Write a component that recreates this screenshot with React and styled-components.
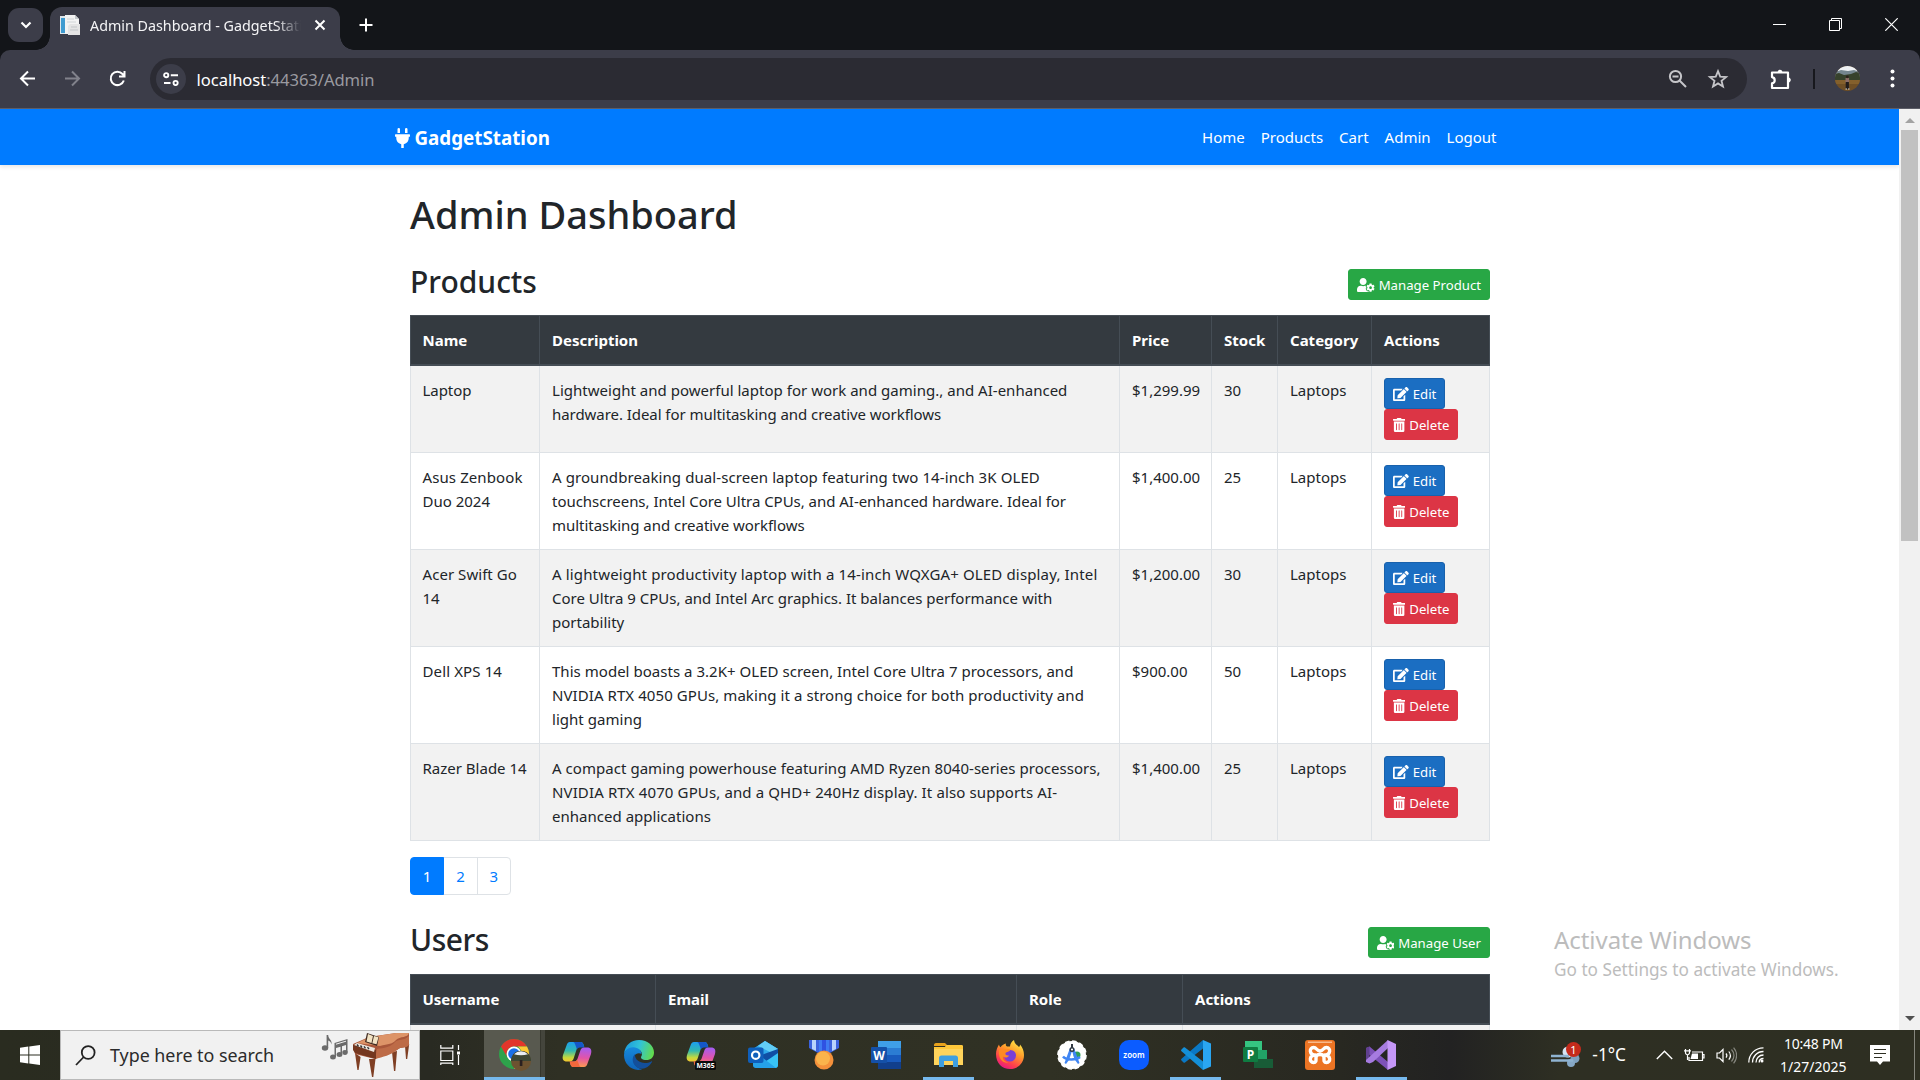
import React from "react";
import styled, { createGlobalStyle, css } from "styled-components";
import { FaPlug, FaUserCog, FaEdit, FaTrashAlt } from "react-icons/fa";

const GlobalStyle = createGlobalStyle`
  *, *::before, *::after { box-sizing: border-box; }
  body {
    margin: 0;
    overflow: hidden;
    font-family: "Noto Sans", "Open Sans", sans-serif;
    font-size: 15px;
    line-height: 24px;
    color: #212529;
    background: #fff;
  }
  svg { display: block; flex: none; }
`;

const Desktop = styled.div`
  width: 1920px;
  height: 1080px;
  display: flex;
  flex-direction: column;
  overflow: hidden;
`;

/* ---------- browser frame ---------- */

const TabStrip = styled.header`
  flex: none;
  height: 50px;
  display: flex;
  background: #131519;
  color: #fff;
`;

const TabSearch = styled.button`
  width: 35px;
  height: 34px;
  margin: 8px 7px 0 8px;
  padding: 0;
  border: 0;
  border-radius: 11px;
  background: #3c3d49;
  display: grid;
  place-items: center;
`;

const Tab = styled.div`
  position: relative;
  width: 290px;
  height: 43px;
  margin-top: 7px;
  padding: 0 13px 7px 10px;
  border-radius: 12px 12px 0 0;
  background: #3c3d49;
  display: flex;
  align-items: center;
  &::before,
  &::after {
    content: "";
    position: absolute;
    bottom: 0;
    width: 14px;
    height: 14px;
  }
  &::before {
    left: -14px;
    background: radial-gradient(circle at 0 0, transparent 13.5px, #3c3d49 14px);
  }
  &::after {
    right: -14px;
    background: radial-gradient(circle at 100% 0, transparent 13.5px, #3c3d49 14px);
  }
`;

const TabTitle = styled.span`
  width: 211px;
  margin: 0 13px 0 10px;
  padding-top: 1px;
  overflow: hidden;
  white-space: nowrap;
  font-size: 14.3px;
  color: #f4f4f6;
  mask-image: linear-gradient(90deg, #000 88%, transparent 100%);
`;

const NewTab = styled.div`
  width: 51px;
  height: 50px;
  display: grid;
  place-items: center;
`;

const WindowControls = styled.div`
  margin-left: auto;
  display: flex;
  gap: 43px;
  padding: 18px 22px 0 0;
`;

const ToolbarBack = styled.div`
  flex: none;
  background: #131519;
`;

const Toolbar = styled.div`
  height: 59px;
  display: flex;
  align-items: center;
  padding: 0 18px 1px 18px;
  border-bottom: 1px solid #5d5e68;
  border-radius: 10px 10px 0 0;
  background: #3c3d49;
  color: #fff;
`;

const NavIcons = styled.div`
  display: flex;
  gap: 26px;
  margin-right: 23px;
`;

const Omnibox = styled.div`
  flex: none;
  width: 1597px;
  height: 42px;
  padding: 0 18px 0 6px;
  border-radius: 21px;
  background: #2b2b33;
  display: flex;
  align-items: center;
`;

const SiteInfo = styled.span`
  width: 30px;
  height: 30px;
  margin-right: 10.5px;
  border-radius: 50%;
  background: #3c3d49;
  display: grid;
  place-items: center;
`;

const Url = styled.span`
  padding-top: 2px;
  font-size: 16.6px;
  letter-spacing: -0.05px;
  color: #9a9aa0;
  b {
    font-weight: 400;
    color: #fff;
  }
`;

const OmniActions = styled.div`
  margin-left: auto;
  display: flex;
  align-items: center;
  gap: 18px;
`;

const ToolbarActions = styled.div`
  flex: 1;
  display: flex;
  align-items: center;
  padding-left: 22px;
`;

const Divider = styled.i`
  width: 2px;
  height: 20px;
  margin: 0 20px 0 20px;
  background: #17181d;
`;

/* ---------- web page ---------- */

const Viewport = styled.div`
  position: relative;
  flex: 1;
  min-height: 0;
  display: flex;
`;

const Page = styled.main`
  flex: 1;
  overflow: hidden;
`;

const Scrollbar = styled.div`
  flex: none;
  width: 21px;
  padding: 7px 0 8px;
  background: #f1f1f1;
  display: flex;
  flex-direction: column;
  align-items: center;
  justify-content: space-between;
`;

const ScrollThumb = styled.div`
  width: 17px;
  height: 411px;
  margin: 5px 0 auto;
  background: #c1c1c1;
`;

const Navbar = styled.nav`
  height: 56px;
  padding: 0 394.5px;
  background: #007bff;
  box-shadow: 0 2px 4px rgba(0, 0, 0, 0.1);
  display: flex;
  align-items: center;
  justify-content: space-between;
  color: #fff;
`;

const Brand = styled.div`
  display: flex;
  align-items: center;
  gap: 5px;
  padding-top: 2px;
  font-size: 18.8px;
  font-weight: 700;
`;

const PlugIcon = styled(FaPlug)`
  width: 15px;
  height: 20px;
`;

const UserCogIcon = styled(FaUserCog)`
  width: 17.5px;
  height: 14px;
`;

const EditIcon = styled(FaEdit)`
  width: 15.75px;
  height: 14px;
`;

const TrashIcon = styled(FaTrashAlt)`
  width: 12.25px;
  height: 14px;
`;

const NavLinks = styled.div`
  display: flex;
  padding-right: 8px;
  gap: 16px;
`;

const NavLink = styled.a`
  color: #fff;
`;

const Container = styled.div`
  width: 1080px;
  margin-left: 410px;
  padding-top: 25px;
`;

const Title = styled.h1`
  margin: 0 0 24px;
  font-size: 38px;
  font-weight: 500;
  line-height: 48px;
`;

const SectionHead = styled.div`
  height: 38px;
  margin-bottom: ${(p) => p.$gap}px;
  display: flex;
  align-items: flex-end;
  justify-content: space-between;
`;

const SectionTitle = styled.h2`
  margin: 0;
  font-size: 30px;
  font-weight: 500;
  line-height: 36px;
  letter-spacing: ${(p) => p.$track || 0}px;
`;

const tones = {
  success: ["#28a745", "#28a745"],
  primary: ["#1b6ec2", "#1861ac"],
  danger: ["#dc3545", "#dc3545"],
};

const Button = styled.button`
  display: flex;
  align-items: center;
  gap: 4px;
  height: 31px;
  padding: 1px 8px 0;
  border: 1px solid ${(p) => tones[p.$tone][1]};
  border-radius: 3px;
  background: ${(p) => tones[p.$tone][0]};
  color: #fff;
  font-family: inherit;
  font-size: 13.2px;
  line-height: 21px;
  white-space: nowrap;
`;

const Table = styled.table`
  width: 1080px;
  table-layout: fixed;
  border-collapse: collapse;
  margin-bottom: 16px;
`;

const Col = styled.col`
  width: ${(p) => (p.$w ? p.$w + "px" : "auto")};
`;

const Th = styled.th`
  padding: 12px;
  border: 1px solid #454d55;
  border-bottom-width: 2px;
  background: #343a40;
  color: #fff;
  font-weight: 700;
  text-align: left;
  &:first-child {
    padding-left: 11.5px;
  }
`;

const Tr = styled.tr`
  height: ${(p) => p.$h || 97}px;
  &:nth-child(odd) {
    background: #f2f2f2;
  }
`;

const Td = styled.td`
  padding: 12px;
  border: 1px solid #dee2e6;
  vertical-align: top;
  &:first-child {
    padding-left: 11.5px;
  }
`;

const Line = styled.span`
  display: block;
  white-space: nowrap;
  letter-spacing: ${(p) => p.$track}px;
`;

const ButtonStack = styled.div`
  display: flex;
  flex-direction: column;
  align-items: flex-start;
`;

const Pagination = styled.div`
  display: flex;
  margin-bottom: 25px;
`;

const PageLink = styled.a`
  width: 34.3px;
  height: 38px;
  display: grid;
  place-items: center;
  margin-left: -1px;
  border: 1px solid #dee2e6;
  color: #007bff;
  &:first-child {
    margin-left: 0;
    border-radius: 4px 0 0 4px;
  }
  &:last-child {
    border-radius: 0 4px 4px 0;
  }
  ${(p) =>
    p.$active &&
    css`
      position: relative;
      z-index: 1;
      color: #fff;
      background: #007bff;
      border-color: #007bff;
    `}
`;

const Watermark = styled.div`
  position: absolute;
  left: 1554px;
  top: 813px;
  color: #bcbcbc;
  font-size: 17.2px;
  line-height: 24px;
  white-space: nowrap;
  strong {
    display: block;
    font-size: 24px;
    font-weight: 400;
    line-height: 36px;
    letter-spacing: -0.05px;
  }
`;

/* ---------- taskbar ---------- */

const Taskbar = styled.footer`
  flex: none;
  height: 50px;
  display: flex;
  background: linear-gradient(90deg, #2a2c20 0, #292a22 430px, #2f3024 560px, #303124 1050px, #282821 1340px, #222222 1450px, #2e2f23 1560px, #2e2f22 100%);
  color: #fff;
`;

const Start = styled.div`
  width: 60px;
  display: grid;
  place-items: center;
`;

const SearchBox = styled.div`
  width: 360px;
  padding: 0 8px 0 14px;
  border: 1px solid #b9b9b9;
  background: #f1f1f1;
  color: #2b2b2b;
  display: flex;
  align-items: center;
  span {
    margin: 0 auto 0 14px;
    font-size: 17.9px;
    letter-spacing: -0.03px;
  }
`;

const TaskView = styled.div`
  width: 60px;
  margin-right: 4px;
  display: grid;
  place-items: center;
`;

const AppButton = styled.div`
  width: 61.9px;
  padding-top: ${(p) => (p.$open ? 3 : 0)}px;
  display: flex;
  flex-direction: column;
  align-items: center;
  justify-content: space-between;
  ${(p) =>
    p.$open &&
    css`
      &::after {
        content: "";
        width: ${p.$active ? 61 : 51}px;
        height: 3px;
        background: #76b9ed;
      }
    `}
  ${(p) =>
    p.$active &&
    css`
      align-items: flex-start;
      background: linear-gradient(90deg, #58594f 56px, #35362d 56px, #35362d 57px, #44453c 57px, #44453c 61px, transparent 61px);
    `}
`;

const AppGlyph = styled.div`
  flex: 1;
  width: 61px;
  display: grid;
  place-items: center;
`;

const Tray = styled.div`
  flex: 1;
  display: flex;
  align-items: center;
  padding-left: 139px;
`;

const Temp = styled.span`
  width: 74px;
  padding-left: 10px;
  font-size: 17.2px;
  white-space: nowrap;
`;

const TrayIcons = styled.div`
  display: flex;
  align-items: center;
  gap: 11px;
`;

const Clock = styled.div`
  width: 86px;
  margin-left: 6px;
  text-align: center;
  font-size: 14px;
  line-height: 23px;
  div:first-child {
    letter-spacing: -0.25px;
  }
`;

const ShowDesktop = styled.i`
  height: 50px;
  margin-left: auto;
  width: 6px;
  border-left: 1px solid #85867e;
`;

/* ---------- drawings ---------- */

const Stroke = ({ w, h = w, box, children, color = "#fff", sw = 2, ...rest }) => (
  <svg width={w} height={h} viewBox={box || `0 0 ${w} ${h}`} fill="none" stroke={color} strokeWidth={sw} {...rest}>
    {children}
  </svg>
);

const Favicon = () => (
  <svg width="20" height="20" viewBox="0 0 20 20">
    <path d="M0 1h10v18H0z" fill="#dfe7ec" />
    <path d="M1 3h4v15H1z" fill="#3f9bd0" />
    <path d="M5 0h10l4 4v15H5z" fill="#f3f3f3" />
    <path d="M15 0l4 4h-4z" fill="#c3c8cb" />
    <path d="M7 4h7M7 7h9" stroke="#d0d4d6" />
    <path d="M8 11l2-2h10v11H8z" fill="#e4e4e4" />
    <path d="M11 12h6M10 15h8" stroke="#c2c5c8" />
  </svg>
);

const Avatar = () => (
  <svg width="25" height="25" viewBox="0 0 25 25">
    <defs>
      <clipPath id="avatarClip"><circle cx="12.5" cy="12.5" r="12.5" /></clipPath>
    </defs>
    <g clipPath="url(#avatarClip)">
      <path d="M0 0h25v25H0z" fill="#6f4f25" />
      <path d="M0 0h25v5H0z" fill="#eef1f4" />
      <path d="M0 6l6-2 7 1 6-1 6 2v5H0z" fill="#75868f" />
      <path d="M0 8l4-1 5 2 7-1 5-2 4 1v7H0z" fill="#37422c" />
      <path d="M0 14h25v4H0z" fill="#84602c" />
      <path d="M10.500 12h3.600v5h-3.600z" fill="#8b6c66" />
      <circle cx="12.300" cy="10.800" r="1.400" fill="#2d211c" />
      <path d="M10.700 16h3.200v7h-3.200z" fill="#211c1c" />
      <path d="M10.500 23h1.500M13 23h1.500" stroke="#ddd" />
    </g>
  </svg>
);

const Piano = () => (
  <svg width="90" height="46" viewBox="0 0 90 46">
    <g fill="#6b6b6b">
      <ellipse cx="4" cy="16" rx="3.2" ry="2.8" />
      <path d="M5.6 3h1.600c0 4 4 4.500 3.400 9.500-.6-3-2.400-3.500-3.400-4V16H5.600z" />
      <ellipse cx="12" cy="25" rx="2.900" ry="2.500" />
      <ellipse cx="18.500" cy="22.500" rx="2.900" ry="2.500" />
      <ellipse cx="24" cy="20.500" rx="2.700" ry="2.400" />
      <path d="M13.500 11l13-4v13.500h-1.500v-7.500l-4 1.200v8h-1.500v-7.500l-4.500 1.400v9H13.500z" />
    </g>
    <path d="M15 12.200l10-3" stroke="#f1f1f1" strokeWidth="1" />
    <path d="M34 21l2.400 17h1.200l2-13zM48 27l3 18h1.300l2.200-18zM71 20l2 19h1.300l1.700-20zM84 14l1 13h1.200l2-15z" fill="#7f3f24" />
    <path d="M32 12l16-7 27-4h13v12c-4 4-7 1-12 5l-22 9-20-5z" fill="#a9573a" />
    <path d="M36 11l13-6 26-4h13c-1 5-9 3-13 7-3 4-8 4-16 6z" fill="#dd9468" />
    <path d="M56 17c7-1 14-2 18-7 3-3 9-1 14-6v9c-4 4-8 1-12 5-6 5-14 7-22 9z" fill="#bd6b47" />
    <path d="M32 13l3-1 20 6v9l-21-6-2-3z" fill="#74371f" />
    <path d="M33 13l3-2 18 5-1 4z" fill="#eee7df" />
    <path d="M36 12.500l1.500 2m2-1l1.500 2m2-1.200l1.500 2m2-1.200l1.500 2" stroke="#333" strokeWidth="1.400" />
    <path d="M46 1l12 4-2 9-12-4z" fill="#3f2a20" />
    <path d="M47 2l5 2-1.500 7-5-1.500zM53 4l4.500 1.200-2 7-4.200-1z" fill="#f2e3c3" />
  </svg>
);

const ChromeIcon = () => (
  <svg width="34" height="34" viewBox="0 0 34 34">
    <circle cx="16" cy="16" r="15" fill="#2ea24b" />
    <path d="M3 8.500A15 15 0 0 1 29 8.500H16a7.500 7.500 0 0 0-6.600 11z" fill="#e2352b" />
    <path d="M29 8.500A15 15 0 0 1 16 31l6.500-11.300c2-3.500 1-9-3-11.200z" fill="#fcc934" />
    <circle cx="16" cy="16" r="7.400" fill="#fff" />
    <circle cx="16" cy="16" r="5.800" fill="#1a6fe8" />
    <circle cx="23" cy="23" r="10" fill="#6d5230" />
    <path d="M13.700 19a10 10 0 0 1 18.600 0q1 2 .7 4H13q-.1-2 .7-4z" fill="#3d4634" />
    <path d="M16 16.200a10 10 0 0 1 14 0q-7 2-14 0z" fill="#e9edf2" />
    <path d="M21.800 22h2.600v6h-2.600z" fill="#2a2020" />
  </svg>
);

const Copilot = ({ label }) => (
  <svg width="30" height="30" viewBox="0 0 30 30">
    <defs>
      <linearGradient id="cpA" x1="0" y1="0" x2="0" y2="1">
        <stop offset="0" stopColor="#1d9ff0" /><stop offset=".45" stopColor="#31b8b0" /><stop offset=".8" stopColor="#c5d93c" /><stop offset="1" stopColor="#f4c430" />
      </linearGradient>
      <linearGradient id="cpB" x1="0.300" y1="0" x2="0.200" y2="1">
        <stop offset="0" stopColor="#a75cf0" /><stop offset=".5" stopColor="#e254a8" /><stop offset="1" stopColor="#ffa04a" />
      </linearGradient>
    </defs>
    <path d="M8 2h10c3 0 3.500 2 4.300 5H18c-2 0-3 1-3.600 3l-2.600 8c-.7 2-1.500 3.500-4 3.500H5c-4 0-5-2.500-4-6.500L4.500 5.500C5.200 3.200 6 2 8 2z" fill="url(#cpA)" />
    <path d="M18 2c3 0 3.500 2 4.300 5.500H18c-1.500 0-2.500.5-3 2L13 4c-.5-1.300-1-2-2-2z" fill="#1557c8" />
    <path d="M22 27H12c-3 0-3.500-2-4.300-5.500H12c2 0 3-1 3.600-3l2.600-7.500c.7-2 1.500-3.500 4-3.500H25c4 0 5 2.500 4 6.500l-3.500 9.500c-.7 2.300-1.500 3.500-3.500 3.500z" fill="url(#cpB)" />
    <path d="M12 27c-3 0-3.500-2-4.300-5.500H12c1.500 0 2.500-.5 3-2l2 5c.5 1.500 1 2.500 2 2.500z" fill="#f2683c" />
    {label && (
      <>
        <rect x="9" y="21" width="21" height="9" rx="1.500" fill="#0b0b0b" />
        <text x="19.500" y="28.100" textAnchor="middle" fontSize="6.800" fontWeight="700" fill="#fff">{label}</text>
      </>
    )}
  </svg>
);

const Edge = () => (
  <svg width="30" height="30" viewBox="0 0 30 30">
    <defs>
      <linearGradient id="edA" x1="0" y1="0.300" x2="1" y2="0.500">
        <stop offset="0" stopColor="#1a9ae0" /><stop offset=".5" stopColor="#31c3d8" /><stop offset="1" stopColor="#63dc4c" />
      </linearGradient>
      <linearGradient id="edB" x1="0" y1="0" x2="0" y2="1">
        <stop offset="0" stopColor="#1689dd" /><stop offset="1" stopColor="#0f63b8" />
      </linearGradient>
    </defs>
    <path d="M0 14C1 5 7 0 15 0c9 0 15 6 15 12.500 0 5-3.500 7.500-7.500 7.500-4.500 0-6.500-2-5-4 1-1.500.6-5.500-4-7C8 7 2 9 0 14z" fill="url(#edA)" />
    <path d="M0 15C.5 10 5 7 9.500 7.300c4.500.3 8 3 8 6.700-2-1.500-6-1-7.500 2.500-2 5 1.500 11.500 8 12.800-2 .7-2.500.7-4 .7C6 29.500 0 23 0 15z" fill="url(#edB)" />
    <path d="M11 14c-3 3-3.500 9 1 12.500 5 4 12 2.500 16-4.500.3-.6-.2-1-.8-.6-2 1.100-4 1.600-6.200 1.600-6 0-10.500-4-10-9z" fill="#134f9b" />
  </svg>
);

const Outlook = () => (
  <svg width="30" height="28" viewBox="0 0 30 28">
    <path d="M5 8L17 0l13 8v17l-2 2H8l-3-2z" fill="#1684d8" />
    <path d="M5 8L17 0l13 8-14 9z" fill="#2fa8ea" />
    <path d="M17 0l13 8-6 4L10 5z" fill="#62cdf5" />
    <path d="M13 14l17-6v6l-16 8z" fill="#0f4fa5" />
    <path d="M30 12v12c0 2-1 3-3 3H8z" fill="#38c3f5" />
    <path d="M5 22l10-5 13 10H8c-2 0-3-1-3-3z" fill="#25a1e8" />
    <rect x="0" y="6.500" width="15.500" height="15.500" rx="2" fill="#0f5fbb" />
    <circle cx="7.700" cy="14.200" r="3.700" fill="none" stroke="#fff" strokeWidth="2.200" />
  </svg>
);

const Medal = () => (
  <svg width="30" height="30" viewBox="0 0 30 30">
    <path d="M0 0h30v8l-9 5H9L0 8z" fill="#3c63dd" />
    <path d="M3 0h4v11l-4-2zM23 0h4v9l-4 2z" fill="#b9d4fb" />
    <path d="M10 0h10v13H10z" fill="#3f7bf2" />
    <path d="M13 0h4v13h-4z" fill="#2f52e2" />
    <circle cx="15" cy="20" r="9.500" fill="#f4913b" />
    <circle cx="14" cy="18.500" r="7" fill="#fab44c" />
  </svg>
);

const Word = () => (
  <svg width="30" height="28" viewBox="0 0 30 28">
    <path d="M7 0h23v7H7z" fill="#3f9fe8" />
    <path d="M7 7h23v7H7z" fill="#2b7cd3" />
    <path d="M7 14h23v7H7z" fill="#185abd" />
    <path d="M7 21h23v7H7z" fill="#113f8c" />
    <rect x="0" y="6" width="16" height="16" rx="1" fill="#1450a8" />
    <text x="8" y="18.500" textAnchor="middle" fontSize="12" fontWeight="700" fill="#fff">W</text>
  </svg>
);

const Explorer = () => (
  <svg width="29" height="24" viewBox="0 0 29 24">
    <path d="M0 2c0-1 .5-2 2-2h9l3 3H0z" fill="#e8a21c" />
    <path d="M0 4h11l2-2h14c1.500 0 2 .7 2 2v18H0z" fill="#ffd45c" />
    <path d="M0 4h11l2-2h14c1.500 0 2 .7 2 2v2H0z" fill="#ffc83a" />
    <path d="M5 24v-9c0-1.500.8-2.500 2.500-2.500h14c1.500 0 2.500 1 2.500 2.500v9h-5v-6h-9v6z" fill="#3f9fe0" />
  </svg>
);

const Firefox = () => (
  <svg width="30" height="30" viewBox="0 0 30 30">
    <defs>
      <linearGradient id="ffA" x1="0.800" y1="0" x2="0.250" y2="1">
        <stop offset="0" stopColor="#fff04a" /><stop offset=".4" stopColor="#ff9a2a" /><stop offset=".75" stopColor="#ff3f4c" /><stop offset="1" stopColor="#e3148a" />
      </linearGradient>
    </defs>
    <path d="M1 14C1 10 2.500 7 4 4.500c.3 1.500.8 2 1.500 2.800C7 5 9 4 11 3.500 10.500 5 11 6 12 6.500h3C15 4 16.500 1.500 19 0c.5 4 3 5 5 7 .8-.5 1-1.500 1-2.500C27.500 7 29 11 29 15c0 8-6 14-14 14S1 23 1 14z" fill="url(#ffA)" />
    <path d="M9 15c0-3 3-5 6-5 4 0 6 2.800 6 5.500a6 6 0 0 1-6.500 6C11 21.500 9 18.500 9 15z" fill="#7a3fd6" />
    <path d="M4 10c3-2 6-1.500 7.500-.5 1.500-.6 3-.5 4 .3-1 2.200-4 2-5 3.200-.5 1.500 1 3 3.500 2.500-1 2.500-4.500 2.500-6 1-.5 3 2 5.500 5.500 6.200C8 23.500 3 19 4 10z" fill="#ff8a22" />
  </svg>
);

const AndroidStudio = () => (
  <svg width="30" height="30" viewBox="0 0 30 30">
    <circle cx="15" cy="15" r="14" fill="#fff" />
    <circle cx="15" cy="15" r="14" fill="none" stroke="#fff" strokeWidth="1.600" strokeDasharray="4.500 2.800" />
    <circle cx="20" cy="15" r="3.500" fill="#2f9e58" />
    <path d="M6 16.500c3 3.800 13 3.800 17 .5" stroke="#4086f4" strokeWidth="2.500" fill="none" />
    <path d="M13 8h4l5.500 15-1.500 1-3-4-3-9-3 9-3 4-1.500-1z" fill="#4086f4" />
    <path d="M14 4h2v4h-2z" fill="#303842" />
    <circle cx="15" cy="9.500" r="2.500" fill="#303842" />
    <circle cx="15" cy="9.500" r="1.100" fill="#fff" />
  </svg>
);

const Zoom = () => (
  <svg width="30" height="30" viewBox="0 0 30 30">
    <rect width="30" height="30" rx="10" fill="#0b5cff" />
    <text x="15" y="17.600" textAnchor="middle" fontSize="8" fontWeight="600" fill="#fff">zoom</text>
  </svg>
);

const VSCode = () => (
  <svg width="30" height="30" viewBox="0 0 30 30">
    <path d="M22 0L30 3.500v23L22 30z" fill="#2aa6f2" />
    <path d="M22 0v8.500L4 22.500c-.5.400-1 .3-1.500-.1L.500 20.500c-.6-.6-.6-1.200 0-1.700z" fill="#0a78c4" />
    <path d="M22 30v-8.500L4 7.500c-.5-.4-1-.3-1.500.1L.500 9.500c-.6.6-.6 1.200 0 1.700z" fill="#148fd8" />
  </svg>
);

const Project = () => (
  <svg width="30" height="28" viewBox="0 0 30 28">
    <path d="M2 0h17v10H2z" fill="#35c481" />
    <path d="M13 9h11v10H13z" fill="#21a366" />
    <path d="M11 18h19v9H11z" fill="#185c37" />
    <rect x="0" y="6" width="15" height="15" rx="1" fill="#0f7b41" />
    <text x="7.500" y="18" textAnchor="middle" fontSize="12" fontWeight="700" fill="#fff">P</text>
  </svg>
);

const Xampp = () => (
  <svg width="30" height="30" viewBox="0 0 30 30">
    <rect width="30" height="30" rx="3" fill="#ec7424" />
    <path d="M3 1.500h24v1.500H3z" fill="#f9b98b" />
    <path d="M10.500 15C4 15 4 7.500 8.500 7.500c3.500 0 3 3.500 6.500 3.500s3-3.500 6.500-3.500C26 7.500 26 15 19.500 15c6.500 0 6.500 7.500 2 7.500-3 0-2.500-2.500-2.500-5s-1.500-3-4-3-4 .5-4 3 .5 5-2.500 5C4 22.500 4 15 10.500 15z" fill="none" stroke="#fff" strokeWidth="3.400" strokeLinejoin="round" />
  </svg>
);

const VisualStudio = () => (
  <svg width="30" height="30" viewBox="0 0 30 30">
    <path d="M0 8l3.500-1.500L22 22v8L3 14.500v7L0 20z" fill="#7d51b8" />
    <path d="M0 8l3.500-1.500V22L0 20z" fill="#60408f" />
    <path d="M3.500 23.500L0 22v-2L22 0v8L7 22z" fill="#a67be0" />
    <path d="M21.500 0L30 4v22l-8.500 4z" fill="#c597f8" />
  </svg>
);

const Weather = () => (
  <svg width="31" height="26" viewBox="0 0 31 26">
    <circle cx="17" cy="10" r="5.500" fill="#d5e4f3" />
    <circle cx="24" cy="16.500" r="4.500" fill="#7ea0be" />
    <circle cx="20" cy="21" r="4" fill="#86a8c6" />
    <path d="M0 14h18M0 18.500h22" stroke="#8fb3d1" strokeWidth="2.600" />
    <circle cx="22.500" cy="7.500" r="7.500" fill="#c42b1c" />
    <text x="22.300" y="11.500" textAnchor="middle" fontSize="11" fill="#fff">1</text>
  </svg>
);

/* ---------- data ---------- */

const products = [
  {
    name: [["Laptop", -0.05]],
    description: [
      ["Lightweight and powerful laptop for work and gaming., and AI-enhanced", 0.018],
      ["hardware. Ideal for multitasking and creative workflows", -0.055],
    ],
    price: "$1,299.99", stock: 30, height: 87,
  },
  {
    name: [["Asus Zenbook", 0.1], ["Duo 2024", 0]],
    description: [
      ["A groundbreaking dual-screen laptop featuring two 14-inch 3K OLED", 0.085],
      ["touchscreens, Intel Core Ultra CPUs, and AI-enhanced hardware. Ideal for", -0.03],
      ["multitasking and creative workflows", -0.03],
    ],
    price: "$1,400.00", stock: 25,
  },
  {
    name: [["Acer Swift Go", 0.05], ["14", 0]],
    description: [
      ["A lightweight productivity laptop with a 14-inch WQXGA+ OLED display, Intel", 0.15],
      ["Core Ultra 9 CPUs, and Intel Arc graphics. It balances performance with", 0],
      ["portability", 0],
    ],
    price: "$1,200.00", stock: 30,
  },
  {
    name: [["Dell XPS 14", 0.12]],
    description: [
      ["This model boasts a 3.2K+ OLED screen, Intel Core Ultra 7 processors, and", 0.03],
      ["NVIDIA RTX 4050 GPUs, making it a strong choice for both productivity and", 0.074],
      ["light gaming", 0.03],
    ],
    price: "$900.00", stock: 50,
  },
  {
    name: [["Razer Blade 14", 0]],
    description: [
      ["A compact gaming powerhouse featuring AMD Ryzen 8040-series processors,", 0.045],
      ["NVIDIA RTX 4070 GPUs, and a QHD+ 240Hz display. It also supports AI-", 0.125],
      ["enhanced applications", 0.02],
    ],
    price: "$1,400.00", stock: 25,
  },
];

const productColumns = [["Name", 129], ["Description", 580], ["Price", 92], ["Stock", 66], ["Category", 94], ["Actions"]];
const userColumns = [["Username", 245], ["Email", 361], ["Role", 166], ["Actions"]];

const apps = [
  { icon: <ChromeIcon />, open: true, active: true },
  { icon: <Copilot /> },
  { icon: <Edge /> },
  { icon: <Copilot label="M365" /> },
  { icon: <Outlook /> },
  { icon: <Medal /> },
  { icon: <Word /> },
  { icon: <Explorer />, open: true },
  { icon: <Firefox /> },
  { icon: <AndroidStudio /> },
  { icon: <Zoom /> },
  { icon: <VSCode />, open: true },
  { icon: <Project /> },
  { icon: <Xampp /> },
  { icon: <VisualStudio />, open: true },
];

const Lines = ({ rows }) => rows.map(([text, track]) => <Line key={text} $track={track}>{text}</Line>);

const TableHead = ({ columns }) => (
  <>
    <colgroup>{columns.map(([name, w]) => <Col key={name} $w={w} />)}</colgroup>
    <thead><tr>{columns.map(([name]) => <Th key={name}>{name}</Th>)}</tr></thead>
  </>
);

const BrowserFrame = () => (
  <>
    <TabStrip>
      <TabSearch>
        <Stroke w={12} h={8} sw={2.2}><path d="M1.500 1.500L6 6l4.500-4.500" /></Stroke>
      </TabSearch>
      <Tab>
        <Favicon />
        <TabTitle>Admin Dashboard - GadgetStation</TabTitle>
        <Stroke w={12}><path d="M1.500 1.500l9 9M10.500 1.500l-9 9" /></Stroke>
      </Tab>
      <NewTab><Stroke w={14}><path d="M7 .5v13M.5 7h13" /></Stroke></NewTab>
      <WindowControls>
        <Stroke w={13} sw={1}><path d="M0 6.500h13" /></Stroke>
        <Stroke w={13} sw={1}><path d="M.5 2.500h10v10H.5zM2.500 2.500v-2h10v10h-2" /></Stroke>
        <Stroke w={13} sw={1.200}><path d="M.3.300l12.400 12.400M12.700.300L.3 12.700" /></Stroke>
      </WindowControls>
    </TabStrip>
    <ToolbarBack>
      <Toolbar>
        <NavIcons>
          <Stroke w={19} sw={2}><path d="M17 9.500H3.500M10 2.500l-7 7 7 7" /></Stroke>
          <Stroke w={19} sw={2} color="#81828b"><path d="M2 9.500h13.500M9 2.500l7 7-7 7" /></Stroke>
          <Stroke w={19} sw={2}><path d="M15.800 11.500A6.700 6.700 0 1 1 14.500 5l1.700 1.700M16.500 2v5.500H11" /></Stroke>
        </NavIcons>
        <Omnibox>
          <SiteInfo>
            <Stroke w={16} h={14} sw={1.900}>
              <circle cx="3.200" cy="3.200" r="2.100" /><path d="M7.800 3.200h7.200M1 11h6.500" /><circle cx="12.600" cy="11" r="2.100" />
            </Stroke>
          </SiteInfo>
          <Url><b>localhost</b>:44363/Admin</Url>
          <OmniActions>
            <Stroke w={22} sw={2} color="#c5c5c9"><circle cx="8.500" cy="8.500" r="5.600" /><path d="M5.500 8.500h6M12.500 12.500l6.500 6.500" /></Stroke>
            <Stroke w={22} sw={1.800} color="#c5c5c9"><path d="M11 3.200l2.200 5.500 5.900.4-4.600 3.700 1.500 5.800-5-3.200-5 3.200 1.500-5.800-4.600-3.700 5.900-.4z" /></Stroke>
          </OmniActions>
        </Omnibox>
        <ToolbarActions>
          <Stroke w={24} h={24} sw={2.200} strokeLinejoin="round">
            <path d="M3 5.500h16v15.500H3v-4.600c3.600-.6 3.600-5.700 0-6.300z" />
            <path d="M8.700 5c.3-3 4.400-3 4.700 0zM19.500 10.500c3 .4 3 4.500 0 4.900z" fill="#fff" stroke="none" />
          </Stroke>
          <Divider />
          <Avatar />
          <svg width="65" height="19" viewBox="0 0 65 19" fill="#fff"><circle cx="32.500" cy="2.500" r="2" /><circle cx="32.500" cy="9.500" r="2" /><circle cx="32.500" cy="16.500" r="2" /></svg>
        </ToolbarActions>
      </Toolbar>
    </ToolbarBack>
  </>
);

export default function App() {
  return (
    <Desktop>
      <GlobalStyle />
      <BrowserFrame />
      <Viewport>
        <Page>
          <Navbar>
            <Brand><PlugIcon />GadgetStation</Brand>
            <NavLinks>
              <NavLink>Home</NavLink>
              <NavLink>Products</NavLink>
              <NavLink>Cart</NavLink>
              <NavLink>Admin</NavLink>
              <NavLink>Logout</NavLink>
            </NavLinks>
          </Navbar>
          <Container>
            <Title>Admin Dashboard</Title>
            <SectionHead $gap={15}>
              <SectionTitle>Products</SectionTitle>
              <Button $tone="success"><UserCogIcon />Manage Product</Button>
            </SectionHead>
            <Table>
              <TableHead columns={productColumns} />
              <tbody>
                {products.map((p) => (
                  <Tr key={p.name[0][0]} $h={p.height}>
                    <Td><Lines rows={p.name} /></Td>
                    <Td><Lines rows={p.description} /></Td>
                    <Td>{p.price}</Td>
                    <Td>{p.stock}</Td>
                    <Td>Laptops</Td>
                    <Td>
                      <ButtonStack>
                        <Button $tone="primary"><EditIcon />Edit</Button>
                        <Button $tone="danger"><TrashIcon />Delete</Button>
                      </ButtonStack>
                    </Td>
                  </Tr>
                ))}
              </tbody>
            </Table>
            <Pagination>
              <PageLink $active>1</PageLink>
              <PageLink>2</PageLink>
              <PageLink>3</PageLink>
            </Pagination>
            <SectionHead $gap={16}>
              <SectionTitle $track={-0.5}>Users</SectionTitle>
              <Button $tone="success"><UserCogIcon />Manage User</Button>
            </SectionHead>
            <Table>
              <TableHead columns={userColumns} />
              <tbody><Tr $h={87}>{userColumns.map(([name]) => <Td key={name} />)}</Tr></tbody>
            </Table>
          </Container>
        </Page>
        <Scrollbar>
          <svg width="10" height="9" viewBox="0 0 10 9"><path d="M0 7l5-5 5 5z" fill="#a3a3a3" /></svg>
          <ScrollThumb />
          <svg width="10" height="6" viewBox="0 0 10 6"><path d="M0 0h10L5 5z" fill="#505050" /></svg>
        </Scrollbar>
        <Watermark><strong>Activate Windows</strong>Go to Settings to activate Windows.</Watermark>
      </Viewport>
      <Taskbar>
        <Start>
          <svg width="20" height="20" viewBox="0 0 20 20" fill="#fff"><path d="M0 2.800l8.300-1.200v7.900H0zM9.300 1.500L20 0v9.500H9.300zM0 10.500h8.300v7.900L0 17.200zM9.300 10.500H20V20L9.300 18.500z" /></svg>
        </Start>
        <SearchBox>
          <Stroke w={21} h={21} sw={1.800} color="#222"><circle cx="13.200" cy="7.500" r="6.400" /><path d="M8.700 12L1 20" /></Stroke>
          <span>Type here to search</span>
          <Piano />
        </SearchBox>
        <TaskView>
          <Stroke w={20} h={20} sw={1.200}><path d="M.8 6h12v9.500H.8zM.8 0v3.200h12V0M.8 20v-1.800h12V20M18.500 0v5M18.500 10v10" /><path d="M17 6.500h3v3h-3z" fill="#fff" stroke="none" /></Stroke>
        </TaskView>
        {apps.map((a, i) => (
          <AppButton key={i} $open={a.open} $active={a.active}><AppGlyph>{a.icon}</AppGlyph></AppButton>
        ))}
        <Tray>
          <Weather />
          <Temp>-1°C</Temp>
          <TrayIcons>
            <Stroke w={17} h={10} sw={1.400}><path d="M.8 9l7.700-7.700L16.200 9" /></Stroke>
            <Stroke w={21} h={15} sw={1.200}>
              <path d="M8 4h10.500v8.500H5V9M18.500 6.500h1.500v3.500h-1.500M1.500 1v3.500c0 3 4 3 4 0V1M0 2.800h7M3.500 7v5" /><path d="M8 5.500h6v5.500H6.500z" fill="#fff" stroke="none" />
            </Stroke>
            <Stroke w={21} h={17} sw={1.200}>
              <path d="M1 6h2.500L7 2.500v12L3.500 11H1zM10 6.500c1 1.200 1 3 0 4.200M12.800 4.500c2 2.500 2 5.700 0 8.200" /><path d="M15.500 2.500c3.300 3.500 3.300 8.500 0 12M17.600.6c4 4.600 4 11.200 0 15.800" stroke="#85867e" />
            </Stroke>
            <Stroke w={16} h={16} sw={1.300}>
              <path d="M.8 15.500C.8 7.500 7 .8 15.500.8M4.500 15.500c0-6 4.500-11 11-11M8 15.500c0-4 3-7.500 7.500-7.500M11.200 15.500c0-2 1.500-4 4.300-4" /><circle cx="14" cy="14" r="1.500" fill="#fff" stroke="none" />
            </Stroke>
          </TrayIcons>
          <Clock><div>10:48 PM</div><div>1/27/2025</div></Clock>
          <svg width="34" height="20" viewBox="-14 0 34 20"><path d="M0 0h20v16.500h-7l-3 3.500-3-3.500H0z" fill="#fff" /><path d="M4 4.500h12M4 8.500h12M4 12.500h8" stroke="#2e2f23" strokeWidth="1.200" /></svg>
          <ShowDesktop />
        </Tray>
      </Taskbar>
    </Desktop>
  );
}
